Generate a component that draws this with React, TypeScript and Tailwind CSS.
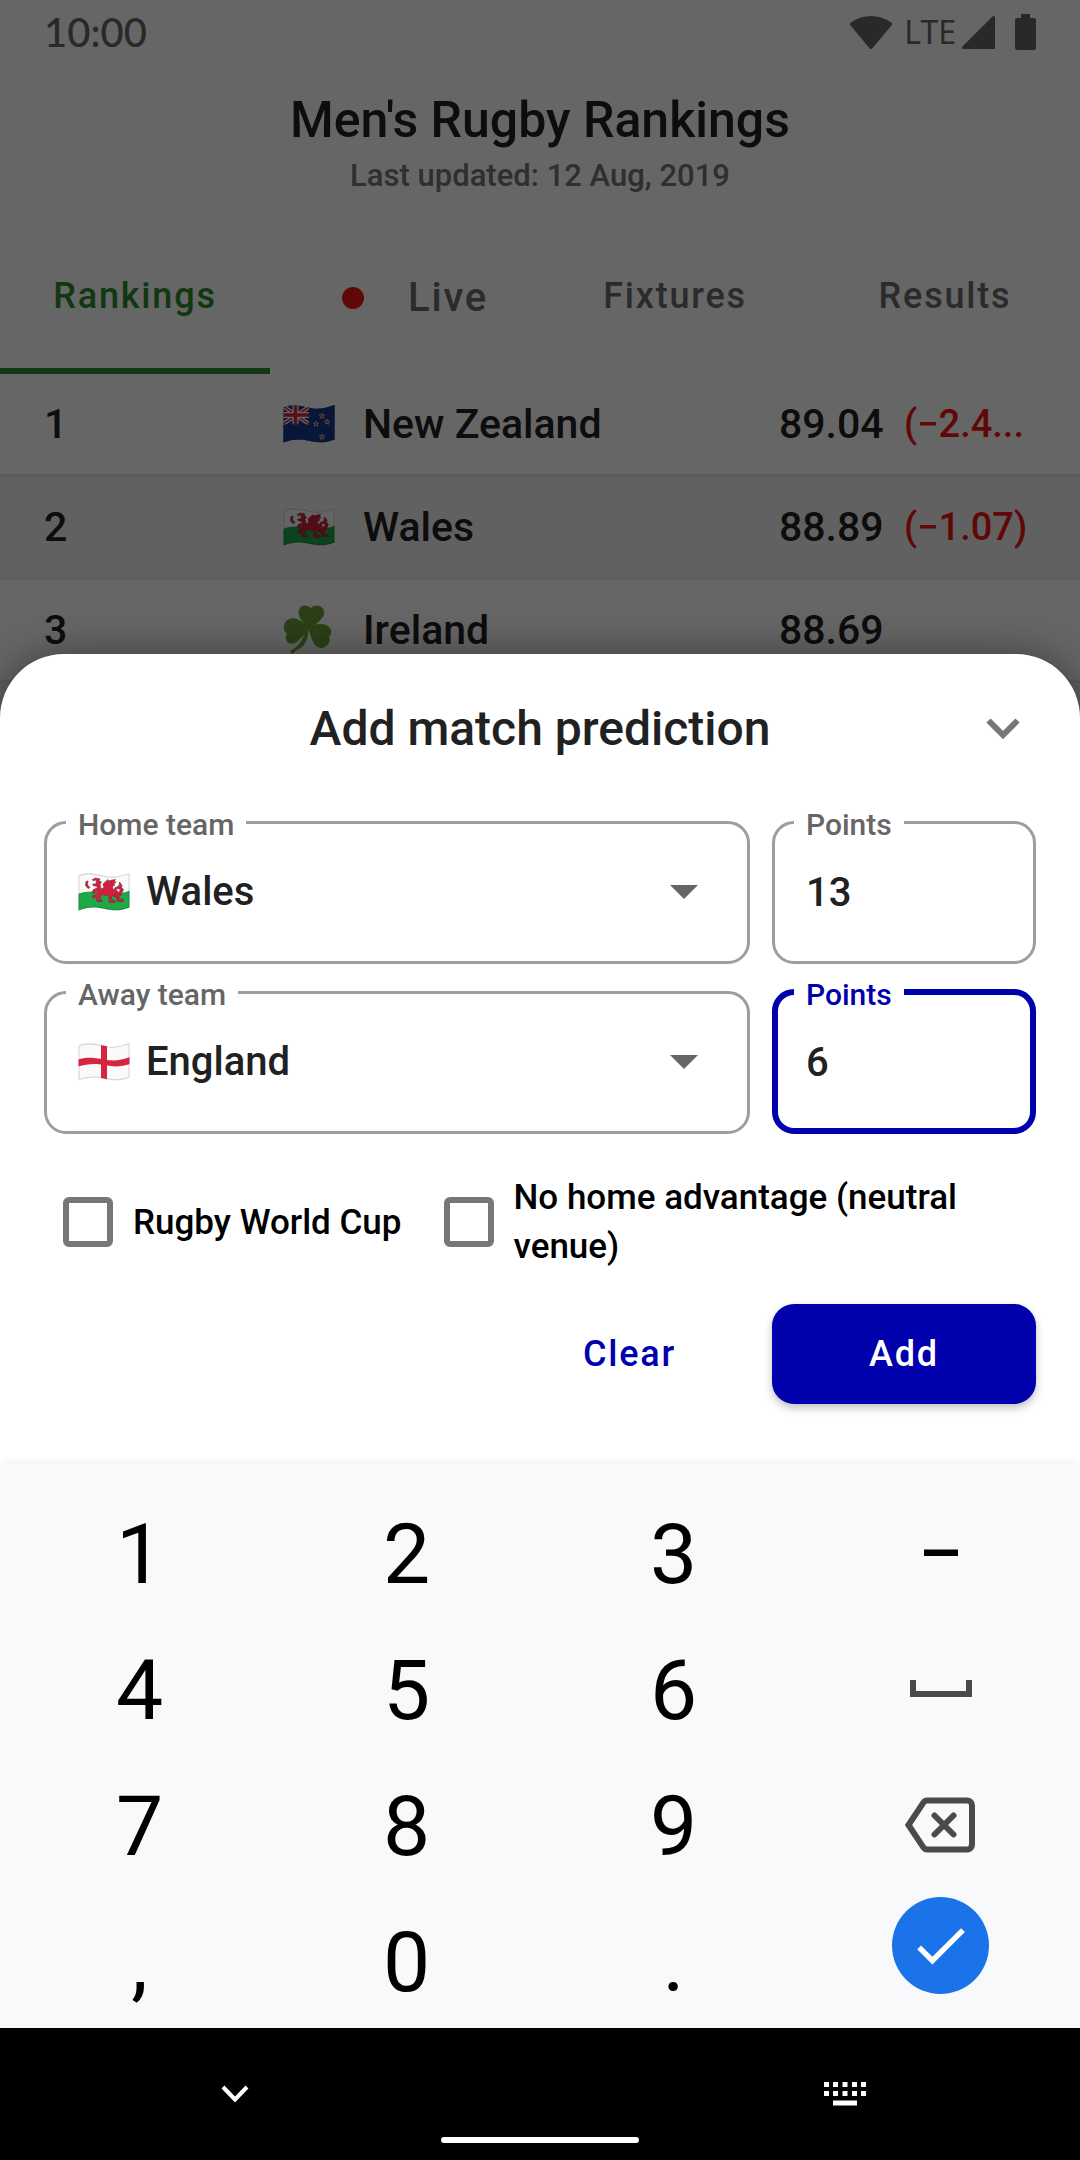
import type { ReactNode } from "react";

const flagShape = "M.5 3.500C7 .5 14 .8 25 3.500S42 4 51.500 1V35.500C42 39 36 39 26 36.800S9 35 .5 38.500Z";

function FlagNewZealand() {
  return (
    <svg viewBox="0 0 52 40" className="h-10 w-[52px]" role="img" aria-label="Flag of New Zealand">
      <clipPath id="nz">
        <path d={flagShape} />
      </clipPath>
      <g clipPath="url(#nz)">
        <rect width="52" height="40" fill="#14388c" />
        <path d="M0 2 26 20M0 20 26 3" stroke="#f4f4f4" strokeWidth="4" />
        <path d="M0 2 26 20M0 20 26 3" stroke="#d8233b" strokeWidth="1.500" />
        <path d="M12.500 0V20.500M0 11H26" stroke="#f4f4f4" strokeWidth="6" />
        <path d="M12.500 0V20.500M0 11H26" stroke="#d8233b" strokeWidth="3.400" />
        <rect x="0" y="20.500" width="26" height="20" fill="#14388c" />
        <rect x="26" y="0" width="26" height="40" fill="#14388c" />
        <g fill="#d8233b" stroke="#fff" strokeWidth=".5">
          <path id="star" d="m39 9 .8 2h2l-1.600 1.300.6 2.100-1.800-1.200-1.800 1.200.6-2.100L36.200 11h2z" />
          <use href="#star" x="-6" y="8" />
          <use href="#star" x="5" y="6" />
          <use href="#star" x="0" y="21" />
        </g>
      </g>
    </svg>
  );
}

function FlagWales() {
  return (
    <svg viewBox="0 0 52 40" className="h-10 w-[52px] shrink-0" role="img" aria-label="Flag of Wales">
      <clipPath id="wales">
        <path d={flagShape} />
      </clipPath>
      <g clipPath="url(#wales)">
        <rect width="52" height="40" fill="#fafafa" />
        <path d="M0 22C8 19 16 19 26 21S43 22 52 18.500V40H0Z" fill="#1fa848" />
        <path d={flagShape} fill="none" stroke="#000" strokeOpacity=".16" strokeWidth="2" />
      </g>
      <g fill="#d3213d" stroke="#7a2030" strokeWidth=".6" strokeLinejoin="round">
        <path d="M14 8l3.500-2 4.500 1-1 1.800 2.500 1.200-1.500 2 1 5 3-1.500-1-3.500 5-4.500-.5 1.500 8-1.500-1 1.500 1.500 1.500-2 .5.500 2.500-2 .5v3l3.500.5 3 3.500-.5 4 2 2 3 .8v1.700h-6l-1-3.500-4-2.500-1.500 3 2 1.700 2 .3v2h-5.500l-1-2 1-1.200-1-3.500-6.500-1.500-2.500 4 2 1.500 1 1.700h-5.500l-1-1.700 1-1-.5-1.500-3 .7-1.500-1.500 2-1.200 3-1.500 1-2.500-3 .5-1.500 2-1.200-1.500.8-2.500 4.400-2-.5-1.500-3.500-.5-1-1.500 3.500-.5.5-4-3 1-1.200-1Z" />
        <path d="M36.500 22.500l4-1.500 2-3.500-2.500-1-2.500 1-1-1.500 4.500-2 .5-4 2.500 3.500-.5 2 2 2-2.500 5.500-4 3Z" />
        <path d="M8 9.500l2-.5-.5 4 2.500 2.500-2 1-2.500-3Z" />
      </g>
    </svg>
  );
}

function FlagEngland() {
  return (
    <svg viewBox="0 0 52 40" className="h-10 w-[52px] shrink-0" role="img" aria-label="Flag of England">
      <clipPath id="england">
        <path d={flagShape} />
      </clipPath>
      <g clipPath="url(#england)">
        <rect width="52" height="40" fill="#fafafa" />
        <path d={flagShape} fill="none" stroke="#000" strokeOpacity=".16" strokeWidth="2" />
        <path d="M0 17.500C8 15 15 15.500 26 17.500S43 18 52 15V22C43 25 36 25 26 23S9 22 0 24.500Z" fill="#d5253f" />
        <path d="M23 2.500 29 4V37.500L23 36Z" fill="#d5253f" />
      </g>
    </svg>
  );
}

function Shamrock() {
  return (
    <svg viewBox="-2 0 50 50" className="h-[50px] w-[50px]" role="img" aria-label="Shamrock">
      <g fill="#6ea03b">
        <path d="M24 24C18 18 12 11 14 5 16 -1 22 0 26 3 30 -1 37 0 39 6 41 12 32 18 25 24Z" />
        <path d="M25 23C17 31 11 42 4 38 0 36 0 32 2 29 -3 25 -2 17 4 14 12 11 18 18 25 23Z" />
        <path d="M23 22C31 18 41 18 44 22 48 26 46 30 44 32 46 36 43 42 37 43 29 44 26 33 23 22Z" />
        <path d="M23 22c2 10-3 20-11 23l-5 4-2-3c10-5 15-14 15-24Z" />
      </g>
    </svg>
  );
}

const rankings: { rank: string; team: string; flag: ReactNode; points: string; delta: string }[] = [
  { rank: "1", team: "New Zealand", flag: <FlagNewZealand />, points: "89.04", delta: "(−2.4..." },
  { rank: "2", team: "Wales", flag: <FlagWales />, points: "88.89", delta: "(−1.07)" },
  { rank: "3", team: "Ireland", flag: <Shamrock />, points: "88.69", delta: "" },
  { rank: "", team: "", flag: null, points: "", delta: "" },
];

function StatusBar() {
  return (
    <div className="flex h-16 items-center justify-between px-11 text-[#666]">
      <span className="font-['Lato'] text-[40px] font-medium leading-none">10:00</span>
      <div className="flex items-center">
        <svg viewBox="0 0 42 33" className="h-[33px] w-[42px] fill-current">
          <path d="M.6 9.500a2 2 0 0 1-.1-2.800C13-2.200 29-2.200 41.500 6.700a2 2 0 0 1-.1 2.800L22.500 32.200a2 2 0 0 1-3 0Z" />
        </svg>
        <span className="ml-3 font-['Noto_Sans'] text-[32px] leading-none">LTE</span>
        <svg viewBox="0 0 33 33" className="ml-1.5 h-[33px] w-[33px] fill-current">
          <path d="M33 1.500V33H1.500C0 33-.5 31.500.7 30.300L30.300.7C31.500-.5 33 0 33 1.500Z" />
        </svg>
        <svg viewBox="0 0 21 36" className="ml-5 h-9 w-[21px] fill-current">
          <path d="M6 0h9v4h4a2 2 0 0 1 2 2v28a2 2 0 0 1-2 2H2a2 2 0 0 1-2-2V6a2 2 0 0 1 2-2h4Z" />
        </svg>
      </div>
    </div>
  );
}

function Tabs() {
  return (
    <nav className="grid h-[156px] grid-cols-4 text-[36px] font-medium tracking-wider text-[#6b6b6b]">
      <button className="border-b-[6px] border-[#2b8c2b] pt-1.5 text-[#2b8c2b]">Rankings</button>
      <button className="flex items-center justify-center gap-11 pl-5 pt-1 text-[40px]">
        <span className="size-[22px] rounded-full bg-[#f01414]" />
        Live
      </button>
      <button>Fixtures</button>
      <button>Results</button>
    </nav>
  );
}

function RankingsPage() {
  return (
    <div className="absolute inset-0 overflow-hidden bg-white">
      <StatusBar />
      <header className="flex h-[154px] flex-col items-center pt-[26px] text-center">
        <h1 className="text-[50px] font-medium leading-[60px] text-[#212121]">Men's Rugby Rankings</h1>
        <p className="mt-2 text-[31px] font-medium leading-9 text-[#757575]">Last updated: 12 Aug, 2019</p>
      </header>
      <Tabs />
      <table className="w-full table-fixed border-separate border-spacing-0 text-left text-[41px] font-medium leading-none text-[#212121]">
        <colgroup>
          <col className="w-[283px]" />
          <col className="w-20" />
          <col />
          <col className="w-[125px]" />
          <col className="w-[176px]" />
        </colgroup>
        <tbody>
          {rankings.map((row, i) => (
            <tr key={i} className="h-[103px] even:bg-[#f2f2f2] [&>td]:border-b-[3px] [&>td]:border-[#e8e8e8]">
              <td className="pl-11">{row.rank}</td>
              <td>{row.flag}</td>
              <td>{row.team}</td>
              <td>{row.points}</td>
              <td className="whitespace-nowrap text-[38px] text-[#f01414]">{row.delta}</td>
            </tr>
          ))}
        </tbody>
      </table>
      <div className="absolute inset-0 bg-black/60" />
    </div>
  );
}

const legend = "px-3 pt-1.5 text-[30px] font-medium leading-[30px]";

function TeamField({ id, label, team, flag }: { id: string; label: string; team: string; flag: ReactNode }) {
  return (
    <fieldset className="min-w-0 flex-1 rounded-[22px] border-[3px] border-[#9e9e9e] pb-[17px] pl-[19px] text-[#666]">
      <legend className={legend}>
        <label htmlFor={id}>{label}</label>
      </legend>
      <div className="relative flex h-[104px] items-center pl-3">
        {flag}
        <select id={id} defaultValue={team} className="ml-4 h-full flex-1 appearance-none bg-transparent text-[40px] font-medium text-[#212121] outline-none">
          <option>{team}</option>
        </select>
        <svg viewBox="0 0 28 14" className="pointer-events-none absolute right-[49px] h-3.5 w-7 fill-[#666]">
          <path d="M0 0h28L14 14Z" />
        </svg>
      </div>
    </fieldset>
  );
}

function PointsField({ id, value, focused }: { id: string; value: string; focused?: boolean }) {
  return (
    <fieldset
      className={
        focused
          ? "w-[264px] rounded-[22px] border-[6px] border-[#0000ac] pb-3.5 pl-4 text-[#0000ac]"
          : "w-[264px] rounded-[22px] border-[3px] border-[#9e9e9e] pb-[17px] pl-[19px] text-[#666]"
      }
    >
      <legend className={legend}>
        <label htmlFor={id}>Points</label>
      </legend>
      <input id={id} defaultValue={value} inputMode="numeric" className="h-[104px] w-full bg-transparent pl-3 text-[40px] font-medium text-[#212121] outline-none" />
    </fieldset>
  );
}

const checkbox = "size-[50px] shrink-0 appearance-none rounded-md border-[6px] border-[#777] bg-white checked:bg-[#0000ac]";

function PredictionSheet() {
  return (
    <section className="rounded-t-[64px] bg-white px-11 pb-[60px] shadow-[0_0_40px_rgba(0,0,0,0.4)]">
      <header className="relative flex h-[150px] items-center justify-center">
        <h2 className="text-[48px] font-medium text-[#212121]">Add match prediction</h2>
        <button aria-label="Close" className="absolute right-4 text-[#777]">
          <svg viewBox="0 0 34 22" className="h-[22px] w-[34px] fill-none stroke-current stroke-[6]">
            <path d="m2.500 2.500 14.500 14.500 14.500-14.500" />
          </svg>
        </button>
      </header>
      <form onSubmit={(e) => e.preventDefault()}>
        <div className="flex flex-col gap-2.5">
          <div className="flex gap-[22px]">
            <TeamField id="home-team" label="Home team" team="Wales" flag={<FlagWales />} />
            <PointsField id="home-points" value="13" />
          </div>
          <div className="flex gap-[22px]">
            <TeamField id="away-team" label="Away team" team="England" flag={<FlagEngland />} />
            <PointsField id="away-points" value="6" focused />
          </div>
        </div>
        <div className="mt-[39px] flex items-center gap-[42px] pl-[19px] text-[35px] font-medium leading-[49px] text-black">
          <label className="flex shrink-0 items-center gap-5">
            <input type="checkbox" className={checkbox} />
            Rugby World Cup
          </label>
          <label className="flex items-center gap-5">
            <input type="checkbox" className={checkbox} />
            No home advantage (neutral venue)
          </label>
        </div>
        <div className="mt-[33px] flex items-center justify-end gap-[22px] text-[36px] font-medium tracking-wider">
          <button type="button" className="h-[100px] px-[74px] text-[#0000ac]">Clear</button>
          <button type="submit" className="h-[100px] w-[264px] rounded-[22px] bg-[#0000ac] text-white shadow-[0_4px_8px_rgba(0,0,0,0.25)]">
            Add
          </button>
        </div>
      </form>
    </section>
  );
}

function Key({ children }: { children: ReactNode }) {
  return <button className="flex h-[136px] items-center justify-center pt-1.5">{children}</button>;
}

function IconKey({ children, label }: { children: ReactNode; label: string }) {
  return (
    <button aria-label={label} className="flex h-[136px] items-center justify-center pt-0.5">
      {children}
    </button>
  );
}

function Keypad() {
  return (
    <div className="grid grid-cols-4 bg-[#f8f9fb] px-1.5 pt-5 text-[84px] leading-none text-black shadow-[0_-2px_8px_rgba(0,0,0,0.06)]">
      <Key>1</Key>
      <Key>2</Key>
      <Key>3</Key>
      <IconKey label="Minus">
        <svg viewBox="0 0 34 8" className="h-2 w-[34px] fill-black">
          <path d="M0 .5h34v6.500H0z" />
        </svg>
      </IconKey>
      <Key>4</Key>
      <Key>5</Key>
      <Key>6</Key>
      <IconKey label="Space">
        <svg viewBox="0 0 62 18" className="h-[18px] w-[62px] fill-none stroke-[#4a4a4a] stroke-[6]">
          <path d="M3 0v14h56V0" />
        </svg>
      </IconKey>
      <Key>7</Key>
      <Key>8</Key>
      <Key>9</Key>
      <IconKey label="Backspace">
        <svg viewBox="0 0 72 56" className="h-14 w-[72px] fill-none stroke-[#4a4a4a] stroke-[6]" strokeLinejoin="round" strokeLinecap="round">
          <path d="M22 3.500h40a5 5 0 0 1 5 5v39a5 5 0 0 1-5 5H22a4 4 0 0 1-3.300-1.700L3.500 28 18.700 5.200A4 4 0 0 1 22 3.500Z" strokeLinejoin="miter" />
          <path d="m29.500 18.500 19 19M48.500 18.500l-19 19" />
        </svg>
      </IconKey>
      <Key>,</Key>
      <Key>0</Key>
      <Key>.</Key>
      <div className="flex justify-center pt-[5px]">
        <button aria-label="Done" className="flex size-[97px] items-center justify-center rounded-full bg-[#1a73e8]">
          <svg viewBox="0 0 24 24" className="size-[65px] fill-white">
            <path d="M9 16.170 4.830 12l-1.420 1.410L9 19 21 7l-1.410-1.410z" />
          </svg>
        </button>
      </div>
    </div>
  );
}

function NavigationBar() {
  return (
    <div className="flex h-[132px] flex-col justify-between bg-black pb-[17px] pt-[54px]">
      <div className="flex items-center justify-between pl-[221px] pr-[214px]">
        <button aria-label="Hide keyboard">
          <svg viewBox="0 0 28 18" className="h-[18px] w-7 fill-none stroke-white stroke-[4]">
            <path d="m2 2 12 12.500L26 2" />
          </svg>
        </button>
        <button aria-label="Switch keyboard">
          <svg viewBox="0 0 42 24" className="h-6 w-[42px] fill-white">
            {[0, 9, 18.5, 28, 37].map((x) => (
              <path key={x} d={`M${x} 0h5v5h-5zM${x} 9h5v5h-5z`} />
            ))}
            <path d="M9 18.500h24v5H9z" />
          </svg>
        </button>
      </div>
      <div className="mx-auto h-1.5 w-[198px] rounded-full bg-white" />
    </div>
  );
}

export default function App() {
  return (
    <main className="relative min-h-screen font-['Roboto',sans-serif]">
      <RankingsPage />
      <div className="relative flex min-h-screen flex-col justify-end">
        <PredictionSheet />
        <Keypad />
        <NavigationBar />
      </div>
    </main>
  );
}
